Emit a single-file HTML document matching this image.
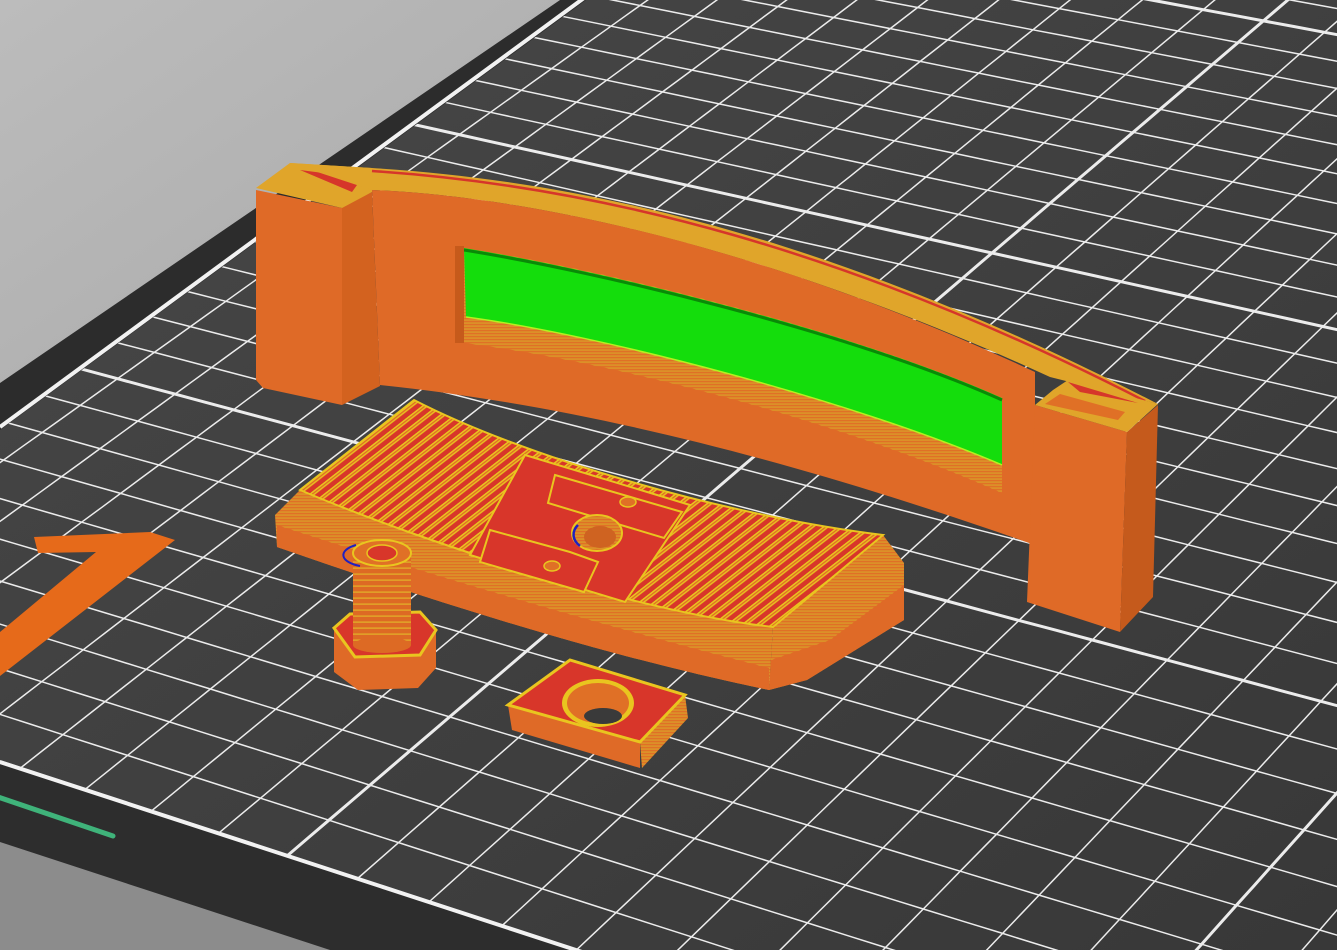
<!DOCTYPE html>
<html><head><meta charset="utf-8"><style>
html,body{margin:0;padding:0;background:#3d3d3d;overflow:hidden;width:1337px;height:950px}
svg{display:block}
</style></head><body>
<svg id="s" width="1337" height="950" viewBox="0 0 1337 950" xmlns="http://www.w3.org/2000/svg">
<defs>
<clipPath id="cl"><rect width="1337" height="950"/></clipPath>
<clipPath id="bedclip"><polygon points="584,-2 0,427 0,762 582,952 1337,952 1337,-2"/></clipPath>
<linearGradient id="bedg" x1="0" y1="0" x2="1" y2="1">
<stop offset="0" stop-color="#474747"/><stop offset="1" stop-color="#383838"/>
</linearGradient>
<linearGradient id="grayg" x1="0" y1="0" x2="1" y2="1">
<stop offset="0" stop-color="#bcbcbc"/><stop offset="1" stop-color="#a9a9a9"/>
</linearGradient>
<pattern id="stripes" width="9" height="9" patternUnits="userSpaceOnUse" patternTransform="rotate(52)">
<rect width="9" height="9" fill="#d8362a"/>
<rect x="3.5" width="1.5" height="9" fill="#e9c51f"/>
<rect x="5" width="1.2" height="9" fill="#e06a25"/>
<rect x="6.2" width="1.5" height="9" fill="#e9c51f"/>
</pattern>
<pattern id="layers" width="6" height="3" patternUnits="userSpaceOnUse">
<rect width="6" height="3" fill="#e07026"/>
<rect y="1.6" width="6" height="0.9" fill="#d8b02a"/>
</pattern>
<pattern id="ridges" width="6" height="6" patternUnits="userSpaceOnUse">
<rect width="6" height="6" fill="#dd6a24"/>
<rect y="3.5" width="6" height="1.2" fill="#e2b429"/>
</pattern>
</defs>
<g clip-path="url(#cl)">
<rect width="1337" height="950" fill="url(#bedg)"/>
<g id="grid" clip-path="url(#bedclip)"></g>
<polygon points="560,0 586,0 0,430 0,383" fill="#2c2c2c"/>
<polygon points="0,0 560,0 0,383" fill="url(#grayg)"/>
<polygon points="0,764 580,950 0,950" fill="#2d2d2d"/>
<polygon points="0,842 330,950 0,950" fill="#8c8c8c"/>
<line x1="0" y1="762" x2="582" y2="952" stroke="#f2f2f2" stroke-width="4"/>
<line x1="0" y1="427" x2="584" y2="-2" stroke="#f2f2f2" stroke-width="4"/>
<line x1="-2" y1="797" x2="113" y2="836" stroke="#3fb37a" stroke-width="5" stroke-linecap="round"/>
<polygon points="34,537 150,532 175,540 0,676 0,632 96,552 38,553" fill="#e66a1a"/>

<!-- left pillar -->
<polygon points="256,190 342,208 342,405 263,388 256,380" fill="#df6a27"/>
<polygon points="342,206 372,192 380,386 342,405" fill="#d3621f"/>
<polygon points="256,188 290,163 372,168 372,192 342,208" fill="#e0a52a"/>
<polygon points="300,170 362,178 352,192" fill="#d6362a"/>
<!-- arch top surface -->
<path d="M290,163 L372,168 C600,182 850,245 1158,404 L1050,377 C800,262 560,198 372,190 Z" fill="#e0a52a"/>
<path d="M372,171 C600,186 850,250 1145,401" fill="none" stroke="#d6362a" stroke-width="2.5"/>
<path d="M372,190 C560,198 800,262 1035,372 L1035,545 C850,480 620,410 380,385 Z" fill="#df6a27"/>
<path d="M457,247 C600,268 850,330 1002,398 L1002,493 C850,425 620,362 457,342 Z" fill="url(#layers)"/>
<path d="M464,248 C600,270 850,330 1002,398 L1002,465 C850,400 600,335 466,317 Z" fill="#14dd0c"/>
<path d="M464,250 C600,272 850,332 1002,400" fill="none" stroke="#0a8a08" stroke-width="3"/>
<path d="M466,317 C600,335 850,400 1002,465" fill="none" stroke="#b4f020" stroke-width="1.5"/>
<rect x="455" y="246" width="9" height="97" fill="#c65a1b"/>
<!-- right pillar -->
<polygon points="1035,405 1127,432 1120,632 1027,602" fill="#df6a27"/>
<polygon points="1127,432 1158,405 1153,597 1120,632" fill="#c55a1c"/>
<polygon points="1035,405 1053,390 1068,380 1158,404 1127,432" fill="#e0a52a"/>
<polygon points="1068,382 1138,403 1080,392" fill="#d6362a"/>
<polygon points="1045,404 1060,394 1125,412 1118,420" fill="#e07026"/>

<!-- PLATE -->
<path d="M275,515 L300,490 C430,545 640,612 773,627 L769,690 C600,655 430,600 277,547 Z" fill="url(#layers)"/>
<path d="M277,525 C430,575 600,625 769,668 L769,690 C600,655 430,600 277,547 Z" fill="#df6a27"/>
<polygon points="883,535 904,563 904,620 807,680 769,690 773,627" fill="url(#layers)"/>
<polygon points="904,585 904,620 807,680 769,690 771,660 830,640" fill="#df6a27"/>
<path d="M414,400 C520,455 720,515 883,535 L773,627 C640,612 430,545 300,490 Z" fill="url(#stripes)"/>
<path d="M414,400 C520,455 720,515 883,535 L773,627 C640,612 430,545 300,490 Z" fill="none" stroke="#e9c51f" stroke-width="2"/>
<polygon points="525,455 690,505 625,602 470,555" fill="#d8362a" stroke="#e9c51f" stroke-width="2"/>
<polygon points="555,475 682,512 664,538 548,503" fill="#d8362a" stroke="#e9c51f" stroke-width="2"/>
<polygon points="490,530 570,552 598,562 584,592 480,562" fill="#d8362a" stroke="#e9c51f" stroke-width="2"/>
<ellipse cx="597" cy="533" rx="25" ry="18" fill="url(#layers)" stroke="#e9c51f" stroke-width="2"/>
<ellipse cx="600" cy="537" rx="16" ry="11" fill="#cf6321"/>
<path d="M578,525 A22,16 0 0,0 580,546" fill="none" stroke="#2020c0" stroke-width="2.5"/>
<ellipse cx="628" cy="502" rx="8" ry="5" fill="#e07026" stroke="#e9c51f" stroke-width="1.5"/>
<ellipse cx="552" cy="566" rx="8" ry="5" fill="#e07026" stroke="#e9c51f" stroke-width="1.5"/>

<!-- BOLT -->
<polygon points="334,628 355,657 420,655 436,630 436,668 418,688 358,690 334,672" fill="#df6a27"/>
<polygon points="334,628 350,614 420,612 436,630 420,655 355,657" fill="#d8362a" stroke="#e9c51f" stroke-width="3"/>
<rect x="353" y="553" width="58" height="92" fill="url(#ridges)"/>
<ellipse cx="382" cy="645" rx="29" ry="8" fill="#dd6a24"/>
<ellipse cx="382" cy="553" rx="29" ry="13" fill="#e07026" stroke="#e9c51f" stroke-width="2"/>
<ellipse cx="382" cy="553" rx="15" ry="8" fill="#d8362a" stroke="#e9c51f" stroke-width="1.5"/>
<path d="M356,545 A28,12 0 0,0 360,566" fill="none" stroke="#2020c0" stroke-width="2"/>

<!-- NUT -->
<polygon points="508,705 640,742 640,768 512,730" fill="#df6a27"/>
<polygon points="640,742 685,695 688,718 642,768" fill="url(#layers)"/>
<polygon points="508,705 570,660 685,695 640,742" fill="#d8362a" stroke="#e9c51f" stroke-width="3"/>
<ellipse cx="598" cy="703" rx="36" ry="24" fill="#e9c51f"/>
<ellipse cx="598" cy="703" rx="31" ry="20" fill="#e07026"/>
<ellipse cx="603" cy="716" rx="19" ry="8" fill="#3a3a3a"/>
</g>
</svg>
<script>
(function(){
var src=[[10,0],[11,0],[10,20],[9,20]], dst=[[287,856],[357,879],[992,253],[929,239]];
var A=[],b=[];
for(var k=0;k<4;k++){var i=src[k][0],j=src[k][1],x=dst[k][0],y=dst[k][1];
A.push([i,j,1,0,0,0,-x*i,-x*j]);b.push(x);
A.push([0,0,0,i,j,1,-y*i,-y*j]);b.push(y);}
var n=8;
for(var c=0;c<n;c++){var p=c;for(var r=c+1;r<n;r++)if(Math.abs(A[r][c])>Math.abs(A[p][c]))p=r;
var t=A[c];A[c]=A[p];A[p]=t;t=b[c];b[c]=b[p];b[p]=t;
for(var r=0;r<n;r++){if(r==c)continue;var f=A[r][c]/A[c][c];for(var q=c;q<n;q++)A[r][q]-=f*A[c][q];b[r]-=f*b[c];}}
var h=[];for(var c=0;c<n;c++)h.push(b[c]/A[c][c]);
function P(i,j){var d=h[6]*i+h[7]*j+1;return [(h[0]*i+h[1]*j+h[2])/d,(h[3]*i+h[4]*j+h[5])/d,d];}
var g=document.getElementById('grid'),ns='http://www.w3.org/2000/svg';
function line(fn,idx){var pts=[];for(var s=-15;s<=60;s+=0.5){var q=fn(s);if(q[2]<0.15)continue;
if(q[0]<-600||q[0]>2000||q[1]<-600||q[1]>1600)continue;
pts.push(q[0].toFixed(1)+','+q[1].toFixed(1));}
if(pts.length<2)return;var e=document.createElementNS(ns,'polyline');e.setAttribute('points',pts.join(' '));
e.setAttribute('fill','none');e.setAttribute('stroke','#ececec');e.setAttribute('stroke-width',idx%10==0?3:1.5);g.appendChild(e);}
for(var i=-10;i<=45;i++)line(function(s){return P(i,s);},i);
for(var j=0;j<=45;j++)line(function(s){return P(s,j);},j);
})();
</script>
</body></html>
